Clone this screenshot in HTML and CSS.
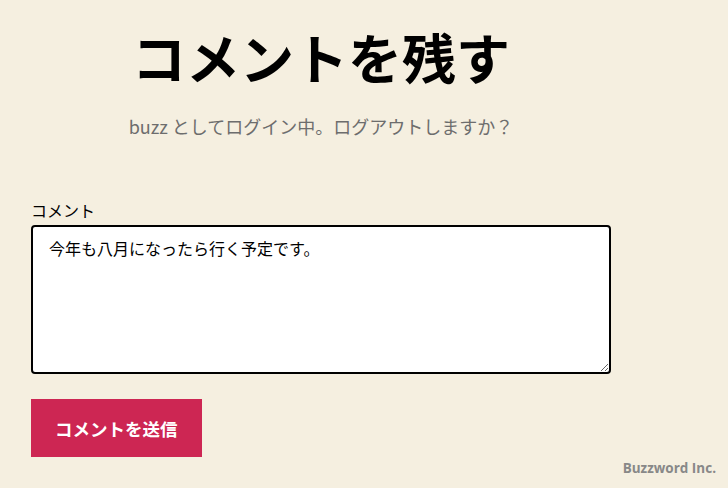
FILE: index.html
```html
<!DOCTYPE html>
<html lang="ja">
<head>
  <meta charset="UTF-8">
  <title>コメントを残す</title>
  <link rel="stylesheet" href="styles.css">
</head>
<body>
  <div class="respond">
    <h2 class="reply-title">コメントを残す</h2>
    <p class="logged-in">buzz としてログイン中。ログアウトしますか？</p>

    <form class="comment-form">
      <label for="comment">コメント</label>
      <textarea id="comment" rows="6">今年も八月になったら行く予定です。</textarea>
      <div class="form-submit">
        <button type="submit" class="submit">コメントを送信</button>
      </div>
    </form>
  </div>

  <div class="watermark">Buzzword Inc.</div>
</body>
</html>
```

FILE: styles.css
```css
body {
  margin: 0;
  background-color: #f5efe0;
  font-family: "Noto Sans CJK JP", "Noto Sans", sans-serif;
  color: #000;
}

.respond {
  width: 580px;
  margin-left: 31px;
  padding-top: 22px;
}

.reply-title {
  margin: 0;
  text-align: center;
  font-size: 54px;
  font-weight: 700;
  line-height: 1.3;
}

.logged-in {
  margin: 21px 0 0 0;
  text-align: center;
  font-size: 18px;
  color: #6d6d6d;
}

.comment-form {
  margin-top: 62px;
}

.comment-form label {
  display: block;
  font-size: 16px;
  line-height: 1.2;
  margin-bottom: 5px;
}

.comment-form textarea {
  display: block;
  box-sizing: border-box;
  width: 580px;
  height: 149px;
  border: 2px solid #000;
  border-radius: 4px;
  background: #fff;
  padding: 9px 16px;
  font-family: inherit;
  font-size: 16px;
  line-height: 1.5;
  resize: vertical;
}

.form-submit {
  margin-top: 25px;
}

.submit {
  background-color: #cd2653;
  color: #fff;
  border: none;
  padding: 0 24px;
  height: 58px;
  font-family: inherit;
  font-size: 17.5px;
  font-weight: 700;
}

.watermark {
  position: absolute;
  right: 12px;
  bottom: 11px;
  font-family: "Open Sans", sans-serif;
  font-weight: 700;
  font-size: 13.5px;
  color: #888;
}
```
